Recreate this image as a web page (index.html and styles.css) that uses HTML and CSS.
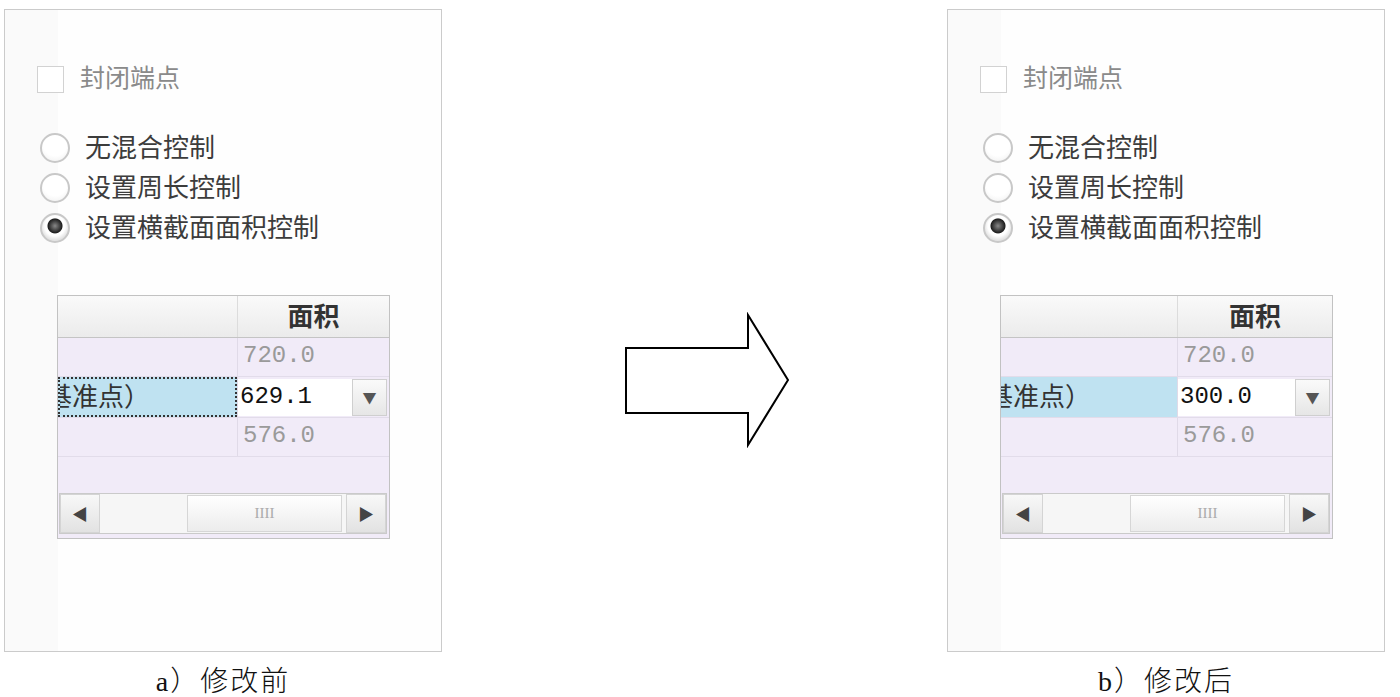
FILE: index.html
```html
<!DOCTYPE html>
<html lang="zh-CN">
<head>
    <meta charset="UTF-8">
    <title>修改前后对比</title>
    <link rel="stylesheet" href="styles.css">
</head>
<body>
    <div class="compare">
        <figure class="shot">
            <div class="panel">
                <label class="check-row">
                    <span class="check-box"></span>
                    <span class="check-text">封闭端点</span>
                </label>
                <ul class="radio-list">
                    <li><span class="radio"></span><span class="rtext">无混合控制</span></li>
                    <li><span class="radio"></span><span class="rtext">设置周长控制</span></li>
                    <li><span class="radio on"></span><span class="rtext">设置横截面面积控制</span></li>
                </ul>
                <div class="table">
                    <div class="thead">
                        <div class="th"></div>
                        <div class="th">面积</div>
                    </div>
                    <div class="tr">
                        <div class="td"></div>
                        <div class="td num">720.0</div>
                    </div>
                    <div class="tr active">
                        <div class="td name focus"><span>基准点）</span></div>
                        <div class="td edit">
                            <span class="input">629.1</span>
                            <span class="drop">▼</span>
                        </div>
                    </div>
                    <div class="tr">
                        <div class="td"></div>
                        <div class="td num">576.0</div>
                    </div>
                    <div class="blank"></div>
                    <div class="hscroll">
                        <span class="sbtn">◀</span>
                        <span class="track"><span class="thumb">IIII</span></span>
                        <span class="sbtn">▶</span>
                    </div>
                </div>
            </div>
            <figcaption>a）修改前</figcaption>
        </figure>

        <svg class="arrow" width="170" height="136" viewBox="0 0 170 136">
            <polygon points="2,36 124,36 124,3 164,68 124,133 124,101 2,101" fill="#fff" stroke="#000" stroke-width="2"/>
        </svg>

        <figure class="shot">
            <div class="panel">
                <label class="check-row">
                    <span class="check-box"></span>
                    <span class="check-text">封闭端点</span>
                </label>
                <ul class="radio-list">
                    <li><span class="radio"></span><span class="rtext">无混合控制</span></li>
                    <li><span class="radio"></span><span class="rtext">设置周长控制</span></li>
                    <li><span class="radio on"></span><span class="rtext">设置横截面面积控制</span></li>
                </ul>
                <div class="table narrow">
                    <div class="thead">
                        <div class="th"></div>
                        <div class="th">面积</div>
                    </div>
                    <div class="tr">
                        <div class="td"></div>
                        <div class="td num">720.0</div>
                    </div>
                    <div class="tr active">
                        <div class="td name"><span>基准点）</span></div>
                        <div class="td edit">
                            <span class="input">300.0</span>
                            <span class="drop">▼</span>
                        </div>
                    </div>
                    <div class="tr">
                        <div class="td"></div>
                        <div class="td num">576.0</div>
                    </div>
                    <div class="blank"></div>
                    <div class="hscroll">
                        <span class="sbtn">◀</span>
                        <span class="track"><span class="thumb">IIII</span></span>
                        <span class="sbtn">▶</span>
                    </div>
                </div>
            </div>
            <figcaption>b）修改后</figcaption>
        </figure>
    </div>
</body>
</html>
```

FILE: styles.css
```css
body {
    margin: 0;
    background-color: #fff;
    font-family: "Noto Sans CJK SC", sans-serif;
    overflow: hidden;
}

.compare {
    display: flex;
    align-items: flex-start;
    padding: 9px 0 0 4px;
}

.shot {
    margin: 0;
    display: flex;
    flex-direction: column;
    align-items: center;
}

.arrow {
    display: block;
    margin: 303px 153px 0 182px;
}

.panel {
    width: 436px;
    height: 641px;
    border: 1px solid #cbcbcb;
    background: linear-gradient(to right, #fafafa 53px, #fefefe 53px);
}

/* checkbox */
.check-row {
    display: flex;
    align-items: center;
    margin: 55px 0 0 32px;
    height: 28px;
}

.check-box {
    width: 25px;
    height: 25px;
    border: 1px solid #d2d2d2;
    background-color: #fff;
}

.check-text {
    position: relative;
    top: -3px;
    margin-left: 16px;
    font-size: 25px;
    color: #8a8a8a;
    line-height: 28px;
}

/* radios */
.radio-list {
    list-style: none;
    margin: 35px 0 0 35px;
    padding: 0;
}

.radio-list li {
    display: flex;
    align-items: center;
    height: 40px;
    font-size: 26px;
    color: #3c3c3c;
}

.rtext {
    position: relative;
    top: -3px;
}

.radio {
    box-sizing: border-box;
    width: 30px;
    height: 30px;
    margin-right: 15px;
    border: 2px solid #c8c8c8;
    border-radius: 50%;
    background: radial-gradient(circle at 50% 35%, #fff 55%, #ededed 100%);
}

.radio.on {
    background: radial-gradient(circle at 50% 42%, #888 0, #1e1e1e 7px, #fff 8px, #fff 10px, #e4e4e4 14px);
}

/* table */
.table {
    width: 331px;
    margin: 47px 0 0 52px;
    border: 1px solid #c2c2c2;
    background-color: #f1ebf8;
    font-size: 26px;
    color: #444;
}

.thead,
.tr {
    display: grid;
    grid-template-columns: 179px 1fr;
}

.narrow .thead,
.narrow .tr {
    grid-template-columns: 176px 1fr;
}

.thead {
    height: 41px;
    background: linear-gradient(#fafafa, #ebebeb);
    border-bottom: 1px solid #c4c4c4;
}

.th {
    text-align: center;
    font-weight: bold;
    line-height: 38px;
    color: #333;
}

.th + .th {
    border-left: 1px solid #dcdcdc;
}

.tr {
    height: 38px;
    border-bottom: 1px solid #e2dcea;
}

.tr.active {
    height: 40px;
}

.td + .td {
    border-left: 1px solid #e0dae8;
}

.num {
    font-family: "Liberation Mono", monospace;
    font-size: 24px;
    line-height: 36px;
    padding-left: 5px;
    color: #9a9a9a;
}

.name {
    overflow: hidden;
    white-space: nowrap;
    background-color: #bfe2f1;
    line-height: 36px;
    color: #333;
}

.name span {
    margin-left: -14px;
}

.name.focus {
    box-sizing: border-box;
    border: 2px dotted #333;
    line-height: 32px;
}

.edit {
    display: flex;
    align-items: stretch;
    padding: 2px 2px 1px 0;
}

.input {
    flex: 1;
    background-color: #fff;
    font-family: "Liberation Mono", monospace;
    font-size: 24px;
    line-height: 36px;
    padding-left: 2px;
    color: #111;
}

.drop {
    width: 33px;
    border: 1px solid #cfcfcf;
    background: linear-gradient(#fafafa, #e6e6e6);
    text-align: center;
    font-size: 14px;
    line-height: 35px;
    color: #555;
}

.blank {
    height: 36px;
}

.hscroll {
    display: flex;
    height: 39px;
    margin: 0 2px 4px 1px;
    border: 1px solid #cacaca;
    background-color: #f4f4f4;
}

.sbtn {
    width: 38px;
    background: linear-gradient(#f8f8f8, #e2e2e2);
    border: 1px solid #d4d4d4;
    text-align: center;
    font-size: 16px;
    line-height: 37px;
    color: #444;
}

.track {
    flex: 1;
    display: flex;
    padding: 1px 4px 1px 87px;
    background-color: #f6f6f6;
}

.thumb {
    flex: 1;
    border: 1px solid #d6d6d6;
    background: linear-gradient(#ffffff, #ececec);
    text-align: center;
    font-family: "Liberation Serif", serif;
    font-size: 15px;
    line-height: 35px;
    color: #aaa;
}

figcaption {
    margin-top: 7px;
    font-family: "Liberation Serif", "Noto Sans CJK SC", serif;
    font-size: 28px;
    font-weight: 300;
    letter-spacing: 2px;
    color: #111;
}
```
